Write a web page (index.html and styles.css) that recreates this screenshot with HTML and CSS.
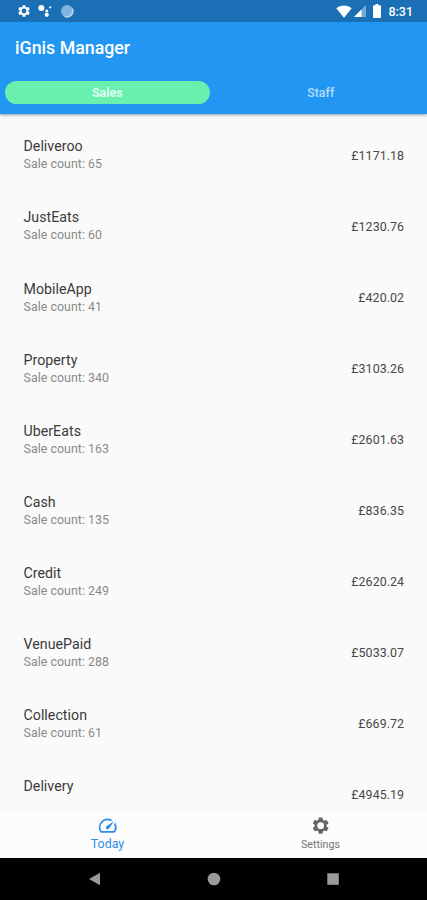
FILE: index.html
```html
<!DOCTYPE html>
<html lang="en">
<head>
<meta charset="utf-8">
<title>iGnis Manager</title>
<link rel="stylesheet" href="styles.css">
</head>
<body>
<svg class="defs" width="0" height="0" aria-hidden="true">
  <symbol id="gear" viewBox="0 0 24 24"><path d="M19.43 12.98c.04-.32.07-.64.07-.98s-.03-.66-.07-.98l2.11-1.65c.19-.15.24-.42.12-.64l-2-3.46c-.12-.22-.39-.3-.61-.22l-2.49 1c-.52-.4-1.08-.73-1.69-.98l-.38-2.65C14.46 2.18 14.25 2 14 2h-4c-.25 0-.46.18-.49.42l-.38 2.65c-.61.25-1.17.59-1.69.98l-2.49-1c-.23-.09-.49 0-.61.22l-2 3.46c-.13.22-.07.49.12.64l2.11 1.65c-.04.32-.07.65-.07.98s.03.66.07.98l-2.11 1.65c-.19.15-.24.42-.12.64l2 3.46c.12.22.39.3.61.22l2.49-1c.52.4 1.08.73 1.69.98l.38 2.65c.03.24.24.42.49.42h4c.25 0 .46-.18.49-.42l.38-2.65c.61-.25 1.17-.59 1.69-.98l2.49 1c.23.09.49 0 .61-.22l2-3.46c.12-.22.07-.49-.12-.64l-2.11-1.65zM12 16.2a4.200 4.200 0 1 1 0-8.400 4.200 4.200 0 0 1 0 8.400z" fill-rule="evenodd"/></symbol>
</svg>
<header class="header">
  <div class="status">
    <svg class="s-gear"><use href="#gear"/></svg>
    <svg class="s-dots" viewBox="0 0 14 14"><circle cx="3.3" cy="4" r="3"/><circle cx="8.8" cy="7" r="1.5"/><circle cx="8.8" cy="10.8" r="2.1"/><circle cx="12.2" cy="3.3" r="1.1"/></svg>
    <svg class="s-ring" viewBox="0 0 14 14"><circle class="disc" cx="7" cy="7" r="6"/><path class="arc" d="M12.2 4.4A5.8 5.8 0 0 1 4.4 12.2"/></svg>
    <svg class="s-wifi" viewBox="0 0 16 13"><path d="M.3 3.3C4.7-.4 11.300-.4 15.700 3.300L8 12.700z"/></svg>
    <svg class="s-signal" viewBox="0 0 12 12"><path class="dim" d="M12 0v12H0z"/><path d="M7.500 4.500V12H0z"/></svg>
    <svg class="s-battery" viewBox="0 0 8 14"><path d="M2.500 0h3v1.300H7q1 0 1 1V13q0 1-1 1H1q-1 0-1-1V2.300q0-1 1-1h1.500z"/></svg>
    <span class="clock">8:31</span>
  </div>
  <h1 class="title">iGnis Manager</h1>
  <nav class="tabs"><span class="tab active">Sales</span><span class="tab">Staff</span></nav>
</header>
<main class="list">
  <div class="row"><div><p class="name">Deliveroo</p><p class="count">Sale count: 65</p></div><span class="amount">£1171.18</span></div>
  <div class="row"><div><p class="name">JustEats</p><p class="count">Sale count: 60</p></div><span class="amount">£1230.76</span></div>
  <div class="row"><div><p class="name">MobileApp</p><p class="count">Sale count: 41</p></div><span class="amount">£420.02</span></div>
  <div class="row"><div><p class="name">Property</p><p class="count">Sale count: 340</p></div><span class="amount">£3103.26</span></div>
  <div class="row"><div><p class="name">UberEats</p><p class="count">Sale count: 163</p></div><span class="amount">£2601.63</span></div>
  <div class="row"><div><p class="name">Cash</p><p class="count">Sale count: 135</p></div><span class="amount">£836.35</span></div>
  <div class="row"><div><p class="name">Credit</p><p class="count">Sale count: 249</p></div><span class="amount">£2620.24</span></div>
  <div class="row"><div><p class="name">VenuePaid</p><p class="count">Sale count: 288</p></div><span class="amount">£5033.07</span></div>
  <div class="row"><div><p class="name">Collection</p><p class="count">Sale count: 61</p></div><span class="amount">£669.72</span></div>
  <div class="row last"><div><p class="name">Delivery</p></div><span class="amount">£4945.19</span></div>
</main>
<nav class="bottom">
  <div class="item current"><svg class="icon" viewBox="0 0 24 24"><path d="M20.380 8.570l-1.230 1.850a8 8 0 0 1-.22 7.580H5.070A8 8 0 0 1 15.580 6.850l1.850-1.230A10 10 0 0 0 3.350 19a2 2 0 0 0 1.720 1h13.850a2 2 0 0 0 1.740-1 10 10 0 0 0-.27-10.440z"/><path d="M10.590 15.410a2 2 0 0 0 2.830 0l5.660-8.490-8.490 5.660a2 2 0 0 0 0 2.830z"/></svg><span>Today</span></div>
  <div class="item"><svg class="icon cog"><use href="#gear"/></svg><span>Settings</span></div>
</nav>
<footer class="system">
  <svg viewBox="0 0 12 14"><path d="M0 7L11 .7v12.600z"/></svg>
  <svg viewBox="0 0 14 14"><circle cx="7" cy="7" r="6.300"/></svg>
  <svg viewBox="0 0 14 14"><rect x="1.300" y="1.300" width="11.500" height="11.500"/></svg>
</footer>
</body>
</html>
```
FILE: styles.css
```css
* { box-sizing: border-box; margin: 0; padding: 0; }
body { width: 427px; height: 900px; overflow: hidden; display: flex; flex-direction: column; background: #fafafa; font-family: Roboto, sans-serif; color: #3a3a3a; }
svg { display: block; fill: currentColor; flex: none; }
.defs { position: absolute; }
.header { height: 114px; flex: none; background: #2196f3; color: #fff; box-shadow: 0 1px 3px rgba(0, 0, 0, .4); }
.status { height: 22px; padding: 0 14px 0 17px; display: flex; align-items: center; background: #1a6fb5; }
.s-gear { width: 14px; height: 14px; }
.s-dots { width: 14px; height: 14px; margin-left: 7px; }
.s-ring { width: 14px; height: 14px; margin-left: 8px; }
.disc { fill: #83b2dc; }
.arc { fill: none; stroke: #b9d5ee; stroke-width: 1.5; }
.s-wifi { width: 16px; height: 13px; margin-left: auto; }
.s-signal { width: 12px; height: 12px; margin-left: 2px; }
.dim { opacity: .4; }
.s-battery { width: 8px; height: 14px; margin-left: 7px; }
.clock { margin-left: 7px; font-size: 12.5px; font-weight: 500; line-height: 23px; }
.title { height: 50px; padding-left: 15px; font-size: 17.800px; font-weight: 500; line-height: 51px; }
.tabs { display: flex; padding-top: 9px; }
.tab { width: 205px; height: 23px; margin: 0 4px 0 5px; border-radius: 12px; text-align: center; font-size: 12.400px; font-weight: 500; line-height: 23px; color: #b5dcfb; }
.active { background: #69f0ae; color: #e0fff0; font-weight: 700; }
.list { height: 698px; padding: 5.500px 23px 0 23.500px; overflow: hidden; }
.row { height: 71.100px; display: flex; justify-content: space-between; align-items: center; }
.name { padding-top: 1.200px; font-size: 14.200px; line-height: 18px; letter-spacing: .03px; }
.count { font-size: 12.400px; line-height: 18.500px; letter-spacing: .04px; color: #8a8a8a; }
.last .name { padding-bottom: 18.500px; }
.amount { font-size: 12.400px; letter-spacing: .05px; color: #484848; }
.bottom { height: 46px; flex: none; display: flex; background: #fcfcfc; }
.item { flex: 1; display: flex; flex-direction: column; align-items: center; padding-top: 3px; font-size: 10.700px; line-height: 15px; color: #757575; }
.icon { width: 21.300px; height: 21.300px; color: #666; }
.cog { width: 19.300px; height: 19.300px; margin: 1px 0; }
.item span { margin-top: 1px; }
.current, .current .icon { color: #2c8fee; }
.current { font-size: 12.400px; line-height: 14px; padding-left: 1px; }
.system { height: 42px; flex: none; display: flex; justify-content: space-between; align-items: center; padding: 0 87px 0 88px; background: #000; color: #9b9b9b; }
.system svg { width: 14px; height: 14px; }
```
